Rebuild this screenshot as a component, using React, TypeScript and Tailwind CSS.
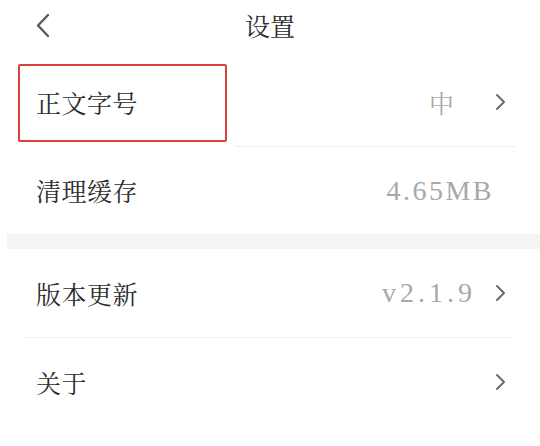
import React from 'react';

const cjk = "font-['Noto_Serif_CJK_SC','Noto_Sans_CJK_SC',serif]";
const num = "font-['Liberation_Serif','Noto_Serif_CJK_SC',serif]";

function ChevronRight() {
  return (
    <svg width="13" height="18" viewBox="0 0 13 18" fill="none" className="shrink-0">
      <path d="M3 2l7 7-7 7" stroke="#6b6b6b" strokeWidth="2" strokeLinecap="round" strokeLinejoin="round" />
    </svg>
  );
}

function ChevronLeft() {
  return (
    <svg width="16" height="25" viewBox="0 0 16 25" fill="none">
      <path d="M13 2L3 12.5 13 23" stroke="#5a5a5a" strokeWidth="2.4" strokeLinecap="round" strokeLinejoin="round" />
    </svg>
  );
}

export default function App() {
  return (
    <div className={`relative w-[540px] h-[446px] bg-white text-[#2b2b2b] ${cjk}`}>
      {/* header */}
      <div className="grid grid-cols-[1fr_auto_1fr] items-center h-[50px]">
        <div className="pl-[35px] flex items-center">
          <ChevronLeft />
        </div>
        <div className="text-[25px] leading-none">设置</div>
        <div />
      </div>

      <div className="h-[8px]" />

      {/* row 1 */}
      <div className="flex items-center justify-between h-[88px] pl-[36px] pr-[33px]">
        <span className="text-[25px] leading-none tracking-[0.5px]">正文字号</span>
        <div className="flex items-center gap-[40px]">
          <span className="text-[25px] leading-none text-[#aaaaaa]">中</span>
          <ChevronRight />
        </div>
      </div>
      <div className="h-px bg-[#efefef] ml-[235px] mr-[25px]" />

      {/* row 2 */}
      <div className="flex items-center justify-between h-[87px] pl-[36px] pr-[46px]">
        <span className="text-[25px] leading-none tracking-[0.5px]">清理缓存</span>
        <span className={`${num} text-[28px] leading-none tracking-[2.5px] text-[#a8a8a8]`}>4.65MB</span>
      </div>

      <div className="h-[15px] bg-[#f4f4f4] ml-[7px]" />

      {/* row 3 */}
      <div className="flex items-center justify-between h-[88px] pl-[36px] pr-[33px]">
        <span className="text-[25px] leading-none tracking-[0.5px]">版本更新</span>
        <div className="flex items-center gap-[18px]">
          <span className={`${num} text-[28px] leading-none tracking-[4px] text-[#a8a8a8]`}>v2.1.9</span>
          <ChevronRight />
        </div>
      </div>
      <div className="h-px bg-[#f0f0f0] ml-[23px] mr-[27px]" />

      {/* row 4 */}
      <div className="flex items-center justify-between h-[88px] pl-[36px] pr-[33px]">
        <span className="text-[25px] leading-none tracking-[0.5px]">关于</span>
        <ChevronRight />
      </div>

      {/* annotation box */}
      <div className="absolute left-[18px] top-[64px] w-[209px] h-[78px] border-2 border-[#d9413b] rounded-[2px]" />
    </div>
  );
}
